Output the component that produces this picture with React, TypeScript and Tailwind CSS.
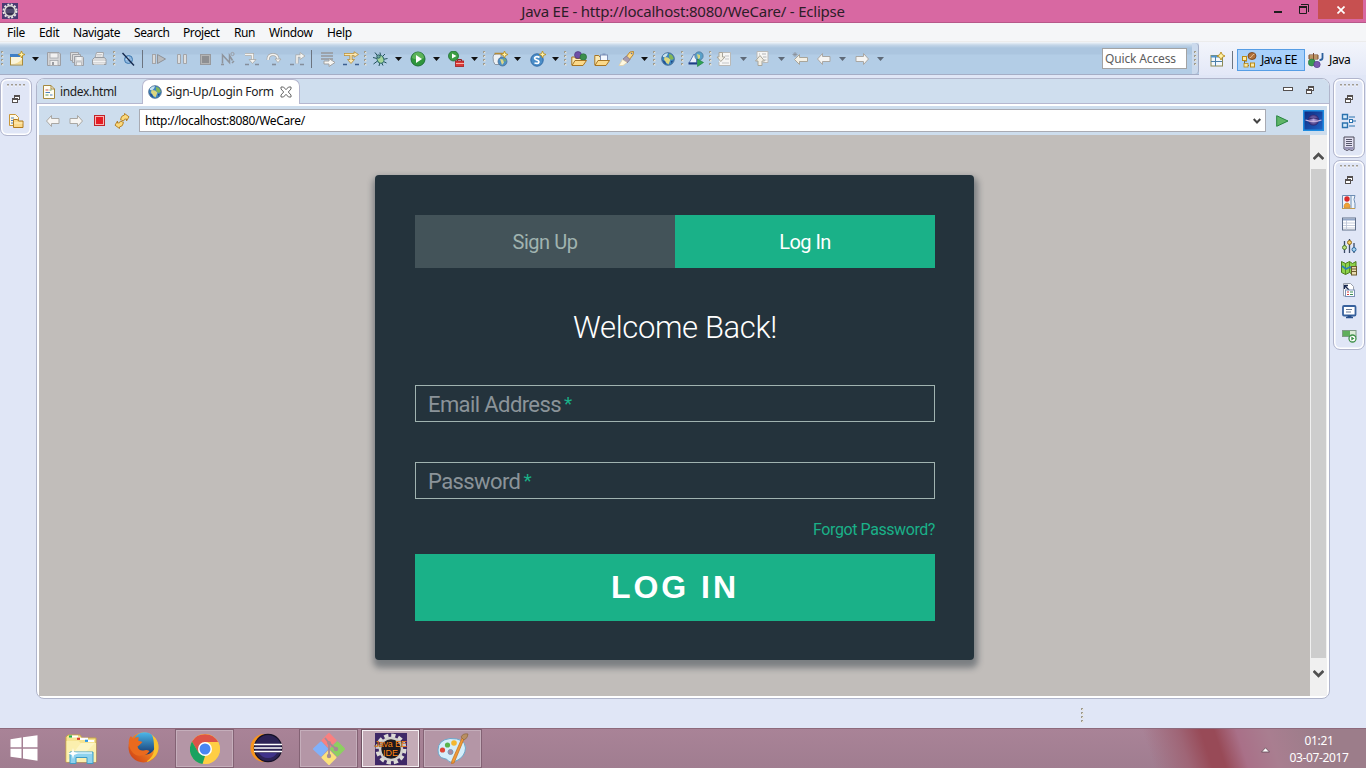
import React from "react";

type IconProps = { className?: string };

const Svg = ({ children, className = "", size = 16 }: { children: React.ReactNode; className?: string; size?: number }) => (
  <svg width={size} height={size} viewBox="0 0 16 16" fill="none" className={`block shrink-0 ${className}`}>
    {children}
  </svg>
);

/* ---------- shared glyphs ---------- */

const Handle = ({ className = "" }: IconProps) => (
  <svg width="3" height="18" viewBox="0 0 3 18" className={`block shrink-0 ${className}`}>
    {[1, 5, 9, 13].map((y) => (
      <g key={y}>
        <rect x="0" y={y} width="2" height="2" fill="#a09c8e" />
        <rect x="1" y={y + 1} width="1.5" height="1.5" fill="#e6e2d6" />
      </g>
    ))}
  </svg>
);

const Caret = ({ className = "", dim = false }: IconProps & { dim?: boolean }) => (
  <svg width="7" height="4" viewBox="0 0 7 4" className={`block shrink-0 ${className}`}>
    <path d="M0 0h7L3.5 4z" fill={dim ? "#5f6a78" : "#111"} />
  </svg>
);

const Sep = ({ className = "" }: IconProps) => <div className={`h-[18px] w-px shrink-0 bg-[#6c7480] ${className}`} />;

const Sparkle = () => (
  <path d="M12.500 0l1 2.500 2.500 1-2.500 1-1 2.500-1-2.500-2.500-1 2.500-1z" fill="#fff3a8" stroke="#b98a17" strokeWidth=".8" />
);

const ArrowLeft = ({ className = "" }: IconProps) => (
  <Svg className={className}>
    <path d="M1.500 8L6.500 2.500v3H14v5H6.500v3z" fill="#f6f5f3" stroke="#a9a7a3" strokeLinejoin="round" />
  </Svg>
);
const ArrowRight = ({ className = "" }: IconProps) => (
  <Svg className={`-scale-x-100 ${className}`}>
    <path d="M1.500 8L6.500 2.500v3H14v5H6.500v3z" fill="#f6f5f3" stroke="#a9a7a3" strokeLinejoin="round" />
  </Svg>
);

const Globe = ({ size = 16, className = "" }: IconProps & { size?: number }) => (
  <Svg size={size} className={className}>
    <circle cx="8" cy="8" r="6.300" fill="#3d86c0" stroke="#3c5f85" strokeWidth=".8" />
    <path d="M3 4.500Q5.500 1.800 8 2.300L7 4.500 5.500 6 3 6z" fill="#c9e3ee" />
    <path d="M4.500 6l3.500.5 2.500 2-2 5L6 11.500 4 8.500z" fill="#dcd67e" />
    <path d="M9 2.800l3 1.200 1.800 3.500-2 1.500-2.500-1.700z" fill="#83b657" />
    <path d="M11 10l2-.3-1.600 2.500z" fill="#1c3d78" />
    <path d="M2.300 9q1 3.500 4 4.500l-1-3z" fill="#204f93" />
  </Svg>
);

/* ---------- toolbar icons ---------- */

const NewWizard = ({ className }: IconProps) => (
  <Svg className={className}>
    <rect x="1.500" y="3.500" width="12" height="10.500" fill="#fbf5dc" stroke="#a88a3c" />
    <rect x="1" y="3" width="10" height="3" fill="#3f7fc6" />
    <path d="M3 13q6 0 10-5v5z" fill="#f3dd98" />
    <Sparkle />
  </Svg>
);
const Save = ({ className }: IconProps) => (
  <Svg className={className}>
    <path d="M1.500 1.500h11.500l1.500 1.500v11.500h-13z" fill="#d3d4d6" stroke="#9c9fa5" />
    <rect x="4" y="2" width="8" height="5" fill="#f1f1f1" stroke="#a6a8ac" strokeWidth=".8" />
    <rect x="4" y="9.500" width="8" height="5" fill="#eee" stroke="#a6a8ac" strokeWidth=".8" />
    <rect x="6" y="11" width="2" height="3" fill="#999ca2" />
  </Svg>
);
const SaveAll = ({ className }: IconProps) => (
  <Svg className={className}>
    <path d="M1.500 1.500h8v8h-8z" fill="#dcdcdd" stroke="#a0a2a7" />
    <path d="M3.500 3.500h8v8h-8z" fill="#dcdcdd" stroke="#a0a2a7" />
    <path d="M5.500 5.500h8l1 1v8h-9z" fill="#d3d4d6" stroke="#9c9fa5" />
    <rect x="7.500" y="6" width="5" height="3" fill="#f4f4f4" />
    <rect x="7.500" y="11" width="5" height="3.500" fill="#efefef" stroke="#a6a8ac" strokeWidth=".6" />
  </Svg>
);
const Print = ({ className }: IconProps) => (
  <Svg className={className}>
    <path d="M4 7L5.500 1.500h7L12 7z" fill="#f2f2f2" stroke="#a4a6aa" />
    <path d="M1.500 8.500L3.500 6.500h10l1.500 2v5h-13.500z" fill="#d8d8d9" stroke="#999ca1" />
    <path d="M2 10.500h12.500M3 13h10" stroke="#f3f3f3" />
    <path d="M6 3.500h5M5.500 5h5" stroke="#b7b9bc" strokeWidth=".7" />
  </Svg>
);
const SkipBreak = ({ className }: IconProps) => (
  <Svg className={className}>
    <circle cx="8.500" cy="8.500" r="4" fill="#8fb7df" stroke="#3e79b0" />
    <circle cx="7.500" cy="7.500" r="1.500" fill="#e0eefa" />
    <path d="M2.500 2l11.500 12.500" stroke="#15294e" strokeWidth="1.400" />
  </Svg>
);
const Resume = ({ className }: IconProps) => (
  <Svg className={className}>
    <rect x="1.500" y="3.500" width="3" height="9" fill="#d9d9d9" stroke="#a3a5a9" />
    <path d="M6.500 3.500L14.500 8l-8 4.500z" fill="#b9bbbe" stroke="#8f9297" />
  </Svg>
);
const Pause = ({ className }: IconProps) => (
  <Svg className={className}>
    <path d="M3.500 3.500h3v9h-3zM9.500 3.500h3v9h-3z" fill="#dedede" stroke="#a3a5a9" />
  </Svg>
);
const StopGrey = ({ className }: IconProps) => (
  <Svg className={className}>
    <rect x="3.500" y="3.500" width="10" height="10" fill="#b4b4b4" stroke="#989a9e" />
    <rect x="5" y="5" width="7" height="7" fill="#8e8f92" />
  </Svg>
);
const Disconnect = ({ className }: IconProps) => (
  <Svg className={className}>
    <path d="M2.500 12.500V4l7 7.500V4.500l3 5" stroke="#8f949c" strokeWidth="1.500" />
    <circle cx="12.500" cy="3" r="1.600" stroke="#9a9ea5" />
    <path d="M1 13.500h3M12 12l2-2" stroke="#8f949c" strokeWidth="1.500" />
  </Svg>
);
const StepInto = ({ className }: IconProps) => (
  <Svg className={className}>
    <path d="M2 3.500h7.500v6" stroke="#a7a7a5" strokeWidth="3" />
    <path d="M2 3.500h7.500v6" stroke="#f4f4f2" strokeWidth="1.600" />
    <path d="M6 8.500h7l-3.500 4z" fill="#f4f4f2" stroke="#a7a7a5" strokeWidth=".8" />
    <path d="M2 13.500h4M12 13.500h4" stroke="#858e9c" strokeWidth="1.600" />
  </Svg>
);
const StepOver = ({ className }: IconProps) => (
  <Svg className={className}>
    <path d="M2 9q0-5.500 5-5.500t5 5.500" stroke="#a7a7a5" strokeWidth="3" />
    <path d="M2 9q0-5.500 5-5.500t5 5.500" stroke="#f4f4f2" strokeWidth="1.600" />
    <path d="M9 8h6l-3 3.500z" fill="#f4f4f2" stroke="#a7a7a5" strokeWidth=".8" />
    <path d="M6 13.500h4" stroke="#858e9c" strokeWidth="1.600" />
  </Svg>
);
const StepReturn = ({ className }: IconProps) => (
  <Svg className={className}>
    <path d="M7 12.500V5h4" stroke="#a7a7a5" strokeWidth="3" />
    <path d="M10 1.500L15 5l-5 3.500z" fill="#f4f4f2" stroke="#a7a7a5" strokeWidth=".8" />
    <path d="M7 12.500V5h5" stroke="#f4f4f2" strokeWidth="1.600" />
    <path d="M0 13.500h4M10 13.500h4" stroke="#858e9c" strokeWidth="1.600" />
  </Svg>
);
const DropFrame = ({ className }: IconProps) => (
  <Svg className={className}>
    <path d="M1 2h12M1 5h12M1 8h12" stroke="#96979a" strokeWidth="1.600" />
    <path d="M4 10h5V7.500l6 4-6 4V13H4z" fill="#f6f6f4" stroke="#a1a1a1" />
  </Svg>
);
const StepFilters = ({ className }: IconProps) => (
  <Svg className={className}>
    <path d="M1 3.500h11M8 4v6" stroke="#b58a33" strokeWidth="3" />
    <path d="M11 .8l4.500 2.700L11 6.200zM4.500 8.500h7L8 12.500z" fill="#fbe9b5" stroke="#b58a33" strokeWidth=".8" />
    <path d="M1.500 3.500h12M8 4v7" stroke="#fbe9b5" strokeWidth="1.400" />
    <path d="M0 13.500h4M12 13.500h4" stroke="#3c5f90" strokeWidth="1.600" />
  </Svg>
);
const Bug = ({ className }: IconProps) => (
  <Svg className={className}>
    <path d="M3 1.500l3 4M1 6.500l4 1M1.500 13l4-3M8 1.500l.5 3M13 3l-3 3M15.500 7.500l-5 1M14.500 12l-4-2M7 15l1-4M11 14.500l-2-4" stroke="#23515c" />
    <ellipse cx="8.300" cy="8.500" rx="3.300" ry="4" fill="#a5d69b" stroke="#2c6d67" transform="rotate(-25 8 8)" />
    <circle cx="6.500" cy="5.500" r="1.700" fill="#6aa79d" stroke="#23515c" strokeWidth=".8" />
  </Svg>
);
const Run = ({ className }: IconProps) => (
  <Svg className={className}>
    <circle cx="8" cy="8" r="7" fill="#2f963c" stroke="#1e6f36" />
    <path d="M2 7a6 6 0 0112 0q-6 3-12 0z" fill="#7cc66c" opacity=".6" />
    <path d="M6 4l6 4-6 4z" fill="#fff" />
  </Svg>
);
const RunExt = ({ className }: IconProps) => (
  <Svg className={className}>
    <circle cx="5.500" cy="5" r="5" fill="#3b9c43" stroke="#1e6f36" strokeWidth=".8" />
    <path d="M4 2.500L8.500 5 4 7.500z" fill="#fff" />
    <path d="M9.500 10V8.500h4V10" stroke="#8c1d1d" />
    <rect x="7.500" y="10" width="8.500" height="5.500" fill="#d93a38" stroke="#9f1d1f" strokeWidth=".8" />
    <path d="M8 12.500h8" stroke="#f8b0a8" />
  </Svg>
);
const NewServer = ({ className }: IconProps) => (
  <Svg className={className}>
    <path d="M1 6q0-3 3-3h5v10.500H3Q.8 11 1 6z" fill="#eef1f4" stroke="#8f98a3" />
    <path d="M2.500 2.500h11" stroke="#b58a33" strokeWidth="1.500" />
    <circle cx="10.500" cy="10.500" r="4.500" fill="#4b8fc4" stroke="#47698f" strokeWidth=".7" />
    <path d="M8 8l3 .5 1 3-2 2.500z" fill="#dcd58a" />
    <path d="M11 7l3 2-1 2z" fill="#7fb657" />
    <Sparkle />
  </Svg>
);
const ServletNew = ({ className }: IconProps) => (
  <Svg className={className}>
    <circle cx="7" cy="9" r="6.200" fill="#4a8dc8" stroke="#2f6aa6" />
    <path d="M9.500 6.500Q7 4.800 5.200 6.200T6.800 9q2.500.8 2 2.400T4.500 12" stroke="#fff" strokeWidth="1.700" />
    <Sparkle />
  </Svg>
);
const OpenType = ({ className }: IconProps) => (
  <Svg className={className}>
    <path d="M.8 14V6h3l1 1.500H11V10" fill="#fbeab5" stroke="#a87522" />
    <circle cx="7" cy="4" r="3.500" fill="#6e4fa5" stroke="#46307a" strokeWidth=".6" />
    <circle cx="12.300" cy="6" r="3.300" fill="#3b8f4d" stroke="#24693a" strokeWidth=".6" />
    <path d="M1 14.500L4 9.500h11.500L12 14.500z" fill="#fbd98a" stroke="#a87522" />
  </Svg>
);
const OpenTask = ({ className }: IconProps) => (
  <Svg className={className}>
    <path d="M.8 14V4.500h4l1 1.500H13v4" fill="#fbeab5" stroke="#a87522" />
    <rect x="6.500" y="4" width="7" height="5.500" fill="#f4f8ff" stroke="#7d8fb4" />
    <rect x="8.500" y="2.500" width="3" height="1.500" fill="#8095be" />
    <path d="M1 14.500L4 9.500h11.500L12 14.500z" fill="#fbd98a" stroke="#a87522" />
  </Svg>
);
const Brush = ({ className }: IconProps) => (
  <Svg className={className}>
    <path d="M8 6l4-5 3.500-.5L15 4l-4 5z" fill="#fbd98a" stroke="#b9852d" />
    <path d="M5 8l3.500-3 3.500 3.500L9 12z" fill="#a79bb0" stroke="#7f7288" strokeWidth=".8" />
    <path d="M1 14.500L4.500 8.500 9 11.500l-4 3z" fill="#fff8e0" stroke="#e3cfa0" strokeWidth=".7" />
    <circle cx="13.500" cy="2.500" r=".8" fill="#5a72a8" />
  </Svg>
);
const RunServer = ({ className }: IconProps) => (
  <Svg className={className}>
    <path d="M1 12L6 3l2.500 3v6z" fill="#e9f0fb" stroke="#5f7fb8" />
    <path d="M.5 12.500h8.500" stroke="#1f3f86" strokeWidth="2" />
    <circle cx="11" cy="5" r="4.200" fill="#5aa0c9" stroke="#47698f" strokeWidth=".6" />
    <path d="M9 3l3 1v3l-2 1z" fill="#d5d67c" />
    <path d="M9.500 8l6 3.500-6 4z" fill="#2fa354" stroke="#1b7a3c" strokeWidth=".6" />
  </Svg>
);
const NextAnn = ({ className }: IconProps) => (
  <Svg className={className}>
    <path d="M5 1.500h9.500v13H3V11" fill="#f6f6f5" stroke="#b9b9b7" />
    <path d="M9 5h4M9 8h4M6 12h7" stroke="#c3c5c8" />
    <path d="M3 1.500h3.500V6H9l-4.200 4.500L1 6h2z" fill="#f3efe4" stroke="#a8a59a" />
  </Svg>
);
const PrevAnn = ({ className }: IconProps) => (
  <Svg className={className}>
    <path d="M3 7V.500h11v11H9" fill="#f6f6f5" stroke="#b9b9b7" />
    <path d="M5 3h1M8 3h4M9 6h3.500M10 9h2.500" stroke="#b3b5b8" />
    <path d="M4 14.500v-4.500H1.500L6 4.500l4.500 5.500H8v4.500z" fill="#f3efe4" stroke="#a8a59a" />
  </Svg>
);
const LastEdit = ({ className }: IconProps) => (
  <Svg className={className}>
    <path d="M2.500 8.500l5-5v3H15.500v4H7.500v3z" fill="#f3efe4" stroke="#a8a59a" />
    <path d="M3 1v5M.5 3.500h5M1.300 1.800l3.400 3.400M4.700 1.800L1.300 5.200" stroke="#8a9099" strokeWidth=".8" />
  </Svg>
);

type Tool = { el: (p: IconProps) => React.ReactNode; gap: string };
const DimCaret = (p: IconProps) => <Caret {...p} dim />;

const tools: Tool[] = [
  { el: Handle, gap: "ml-px" },
  { el: NewWizard, gap: "ml-[5px]" },
  { el: Caret, gap: "ml-[7px]" },
  { el: Save, gap: "ml-[7px]" },
  { el: SaveAll, gap: "ml-[7px]" },
  { el: Print, gap: "ml-[6px]" },
  { el: Handle, gap: "ml-[6px]" },
  { el: SkipBreak, gap: "ml-[4px]" },
  { el: Sep, gap: "ml-[6px]" },
  { el: Resume, gap: "ml-[8px]" },
  { el: Pause, gap: "ml-[7px]" },
  { el: StopGrey, gap: "ml-[7px]" },
  { el: Disconnect, gap: "ml-[7px]" },
  { el: StepInto, gap: "ml-[7px]" },
  { el: StepOver, gap: "ml-[7px]" },
  { el: StepReturn, gap: "ml-[8px]" },
  { el: Sep, gap: "ml-[5px]" },
  { el: DropFrame, gap: "ml-[8px]" },
  { el: StepFilters, gap: "ml-[7px]" },
  { el: Handle, gap: "ml-[5px]" },
  { el: Bug, gap: "ml-[5px]" },
  { el: Caret, gap: "ml-[7px]" },
  { el: Run, gap: "ml-[8px]" },
  { el: Caret, gap: "ml-[7px]" },
  { el: RunExt, gap: "ml-[8px]" },
  { el: Caret, gap: "ml-[7px]" },
  { el: Handle, gap: "ml-[5px]" },
  { el: NewServer, gap: "ml-[6px]" },
  { el: Caret, gap: "ml-[6px]" },
  { el: ServletNew, gap: "ml-[9px]" },
  { el: Caret, gap: "ml-[6px]" },
  { el: Handle, gap: "ml-[5px]" },
  { el: OpenType, gap: "ml-[4px]" },
  { el: OpenTask, gap: "ml-[7px]" },
  { el: Brush, gap: "ml-[8px]" },
  { el: Caret, gap: "ml-[7px]" },
  { el: Handle, gap: "ml-[5px]" },
  { el: Globe, gap: "ml-[4px]" },
  { el: Handle, gap: "ml-[5px]" },
  { el: RunServer, gap: "ml-[4px]" },
  { el: Handle, gap: "ml-[5px]" },
  { el: NextAnn, gap: "ml-[4px]" },
  { el: DimCaret, gap: "ml-[8px]" },
  { el: PrevAnn, gap: "ml-[7px]" },
  { el: DimCaret, gap: "ml-[8px]" },
  { el: LastEdit, gap: "ml-[7px]" },
  { el: ArrowLeft, gap: "ml-[8px]" },
  { el: DimCaret, gap: "ml-[7px]" },
  { el: ArrowRight, gap: "ml-[8px]" },
  { el: DimCaret, gap: "ml-[7px]" },
];

/* ---------- perspective + trim icons ---------- */

const OpenPerspective = ({ className }: IconProps) => (
  <Svg className={className}>
    <rect x="2" y="3.500" width="11.500" height="10.500" fill="#f3f8fd" stroke="#8c8a55" />
    <rect x="2" y="3.500" width="11.500" height="2" fill="#4d93cf" />
    <path d="M6.500 5v9M2 9.500h11" stroke="#4d7fa8" />
    <path d="M12 0l1.300 2.700L16 4l-2.700 1.300L12 8l-1.300-2.700L8 4l2.700-1.300z" fill="#fff3a8" stroke="#b98a17" strokeWidth=".9" />
  </Svg>
);
const JavaEE = ({ className }: IconProps) => (
  <Svg className={className}>
    <path d="M3.500 6v7.500H8M3.500 9H6" stroke="#7b6a3a" />
    <rect x="1.500" y="4.500" width="4" height="4" fill="#fce9a6" stroke="#b98a17" />
    <rect x="9.500" y="11" width="4" height="4" fill="#fce9a6" stroke="#b98a17" />
    <rect x="3" y="11.500" width="4" height="3.500" fill="#fce9a6" stroke="#b98a17" strokeWidth=".8" />
    <ellipse cx="11" cy="4" rx="4" ry="3.500" fill="#b0703a" stroke="#6e3d17" strokeWidth=".8" />
    <path d="M8.500 6q2-.5 2.500-2t2.500-2" stroke="#f0d0a8" strokeWidth=".8" />
  </Svg>
);
const JavaPersp = ({ className }: IconProps) => (
  <Svg className={className}>
    <path d="M1 3h9v4H1zM5.500 1v7M1 5h9" fill="#f7dfa0" stroke="#7d4a2c" />
    <circle cx="3.800" cy="10.500" r="3.500" fill="#3a9a52" stroke="#23703b" strokeWidth=".6" />
    <circle cx="9" cy="12.500" r="3.200" fill="#7a5aae" stroke="#513889" strokeWidth=".6" />
    <path d="M14.500 1v5q0 2-3 2" stroke="#2b5f9c" strokeWidth="1.800" />
  </Svg>
);
const Restore = ({ className = "" }: IconProps) => (
  <svg width="8" height="8" viewBox="0 0 8 8" className={`block shrink-0 ${className}`} fill="none">
    <rect x="2.500" y=".5" width="5" height="4" fill="#fff" stroke="#55504f" />
    <path d="M2 1h6" stroke="#55504f" strokeWidth="2" />
    <rect x=".5" y="3.500" width="5" height="4" fill="#fff" stroke="#55504f" />
    <path d="M0 4h6" stroke="#55504f" strokeWidth="2" />
  </svg>
);
const DotsH = () => (
  <svg width="18" height="3" viewBox="0 0 18 3" className="block shrink-0">
    {[0, 4, 8, 12, 16].map((x) => (
      <g key={x}>
        <rect x={x} y="1" width="1.500" height="1.500" fill="#fff" />
        <rect x={x} y="0" width="2" height="1.500" fill="#9f9a90" />
      </g>
    ))}
  </svg>
);
const ProjExplorer = ({ className }: IconProps) => (
  <Svg className={className}>
    <path d="M1.500 1.500h6l3 3v8h-9z" fill="#fff9e6" stroke="#c9973a" />
    <path d="M3 5h3M3 7.500h2.500M3 10h2" stroke="#4d7fc0" />
    <path d="M5.500 14.500v-8h4l1 1.500h4.500v6.500z" fill="#fbd98a" stroke="#b07a20" />
    <path d="M6 10h8.500" stroke="#fff0c4" />
  </Svg>
);
const Outline = ({ className }: IconProps) => (
  <Svg className={className}>
    <path d="M1.500 1.500h5v4.500h-5zM1.500 10h5v4.500h-5z" fill="#d6eafa" stroke="#2b72ae" strokeWidth="1.400" />
    <path d="M8 4h6M8 13h6M12 8h3" stroke="#2b72ae" strokeWidth="1.200" />
    <rect x="8.500" y="6.500" width="3" height="3" fill="#fff" stroke="#2b72ae" />
  </Svg>
);
const TaskList = ({ className }: IconProps) => (
  <Svg className={className}>
    <path d="M3 1h10v12.500l-2 1-3-1-2 1-3-1.500z" fill="#e3e1f2" stroke="#4c4a5a" />
    <path d="M5 3.500h6M5 5.500h6M5 7.500h6M5 9.500h6" stroke="#57566a" />
    <path d="M3.500 11h9v2l-2 1-3-1-2 1-2-1z" fill="#9a96b8" />
  </Svg>
);
const Markers = ({ className }: IconProps) => (
  <Svg className={className}>
    <path d="M1.500 1.500H10v13H1.500zM10 1.500h4l-1 4 1 4v5h-4" fill="#eef4fb" stroke="#6d8db3" />
    <path d="M1 14.500h13" stroke="#c39b4e" />
    <circle cx="6" cy="5" r="2.700" fill="#d92a2a" />
    <path d="M3 13.500q0-4.500 3-4.500t3 4.500z" fill="#f0a232" stroke="#c77718" strokeWidth=".6" />
  </Svg>
);
const Properties = ({ className }: IconProps) => (
  <Svg className={className}>
    <rect x="1.500" y="2" width="13" height="12" fill="#fff" stroke="#61708a" />
    <path d="M2 3.500h12" stroke="#93a7c8" strokeWidth="2" />
    <path d="M5.500 4v10M2 7h12M2 9.500h12M2 12h12" stroke="#b9c2d4" strokeWidth=".8" />
  </Svg>
);
const Servers = ({ className }: IconProps) => (
  <Svg className={className}>
    <path d="M3.500 3v12M8.500 1v14M13 5v10" stroke="#3b4a66" strokeWidth="1.300" />
    <circle cx="3.500" cy="9.500" r="2" fill="#bfe07a" stroke="#4c7a32" />
    <circle cx="8.500" cy="4.500" r="2" fill="#f6cf64" stroke="#936a1e" />
    <circle cx="13" cy="11.500" r="2" fill="#a9d4f2" stroke="#2d6a9d" />
  </Svg>
);
const DataSource = ({ className }: IconProps) => (
  <Svg className={className}>
    <path d="M.5 1.500l4 2 4-2 3 2 3.500-2v11l-3.500 2-3-2-4 2-4-2z" fill="#8cd34a" stroke="#4c7b1f" />
    <path d="M4.500 3.500v11M8.500 1.500v11" stroke="#5b8b25" />
    <path d="M1 6l4 3 4-2 3 3" stroke="#2a7fb5" strokeWidth="1.600" />
    <rect x="10.500" y="6.500" width="5" height="8.500" fill="#e9dcb0" stroke="#6b5b2c" />
    <path d="M11 9h4M11 11.500h4" stroke="#6b5b2c" />
  </Svg>
);
const Snippets = ({ className }: IconProps) => (
  <Svg className={className}>
    <path d="M2.500 1.500h7l3 3v9.500h-10z" fill="#fff" stroke="#9aa0ad" />
    <path d="M8 8L4 4M3.500 7V3.500H7" stroke="#16264f" strokeWidth="1.300" />
    <rect x="4.500" y="8" width="9" height="6.500" fill="#fff" stroke="#7c90b5" />
    <path d="M6 10h2M6 12.500h2" stroke="#d43a3a" />
    <path d="M9 10h3M9 12.500h3" stroke="#3c8f57" />
  </Svg>
);
const Console = ({ className }: IconProps) => (
  <Svg className={className}>
    <rect x="2" y="2" width="12.500" height="9.500" rx="1" fill="#fff" stroke="#37619d" strokeWidth="1.800" />
    <path d="M5 5.500h6M5 8h5" stroke="#6b7b95" />
    <path d="M5 13.500h7M6.500 12h4" stroke="#28508c" strokeWidth="1.600" />
  </Svg>
);
const Progress = ({ className }: IconProps) => (
  <Svg className={className}>
    <rect x="1.500" y="2.500" width="13.500" height="6" fill="#dcebd8" stroke="#7f9a88" />
    <rect x="2" y="3" width="7" height="5" fill="#5fae5c" />
    <circle cx="11.500" cy="10.500" r="3.500" fill="#fff" stroke="#3d9048" strokeWidth="1.300" />
    <path d="M10.300 8.500l3.200 2-3.200 2z" fill="#3d9048" />
  </Svg>
);

/* ---------- window chrome ---------- */

const TitleBar = () => (
  <header className="flex h-[23px] shrink-0 items-start border-b border-[#b7588a] bg-[#d868a2]">
    <div className="w-[120px] pt-[3px] pl-[2px]">
      <svg width="16" height="16" viewBox="0 0 16 16">
        <rect width="16" height="16" fill="#4a3a72" />
        <circle cx="8" cy="8" r="6.500" fill="none" stroke="#e7e5e2" strokeWidth="2" strokeDasharray="2 1.400" />
        <circle cx="8" cy="8" r="5.300" fill="#35304d" stroke="#dedcd8" strokeWidth="1.500" />
        <path d="M4 7h8M4 9h8" stroke="#6c6690" />
      </svg>
    </div>
    <h1 className="flex-1 text-center text-[15px] leading-[23px] tracking-[-0.220px] text-[#2c1d28]">
      Java EE - http://localhost:8080/WeCare/ - Eclipse
    </h1>
    <div className="flex h-[19px] w-[120px] items-start justify-end pr-[3px]">
      <svg width="8" height="3" className="mt-[11px] mr-[17px]">
        <rect y="0" width="8" height="2" fill="#1d1d1d" />
      </svg>
      <svg width="10" height="10" viewBox="0 0 10 10" fill="none" className="mt-[4px] mr-[9px]">
        <path d="M2 .5h7.500V8" stroke="#1d1d1d" />
        <path d="M0 3h8" stroke="#1d1d1d" strokeWidth="2" />
        <path d="M.5 3v6.500h7V3" stroke="#1d1d1d" />
      </svg>
      <div className="flex h-[19px] w-[45px] items-center justify-center bg-[#c75050]">
        <svg width="8" height="8" viewBox="0 0 8 8">
          <path d="M.5.5l7 7M7.500.5l-7 7" stroke="#fff" strokeWidth="1.700" />
        </svg>
      </div>
    </div>
  </header>
);

const MenuBar = () => (
  <nav className="flex h-[19px] shrink-0 items-center border-b border-[#ececec] bg-[#f5f6f8] pt-[2px] text-[12px] leading-[18px] text-black">
    <span className="ml-[7px] w-[32px] tracking-[-0.300px]">File</span>
    <span className="w-[34px] tracking-[-0.300px]">Edit</span>
    <span className="w-[61px] tracking-[-0.400px]">Navigate</span>
    <span className="w-[49px] tracking-[-0.400px]">Search</span>
    <span className="w-[51px] tracking-[-0.400px]">Project</span>
    <span className="w-[35px] tracking-[-0.400px]">Run</span>
    <span className="w-[58px] tracking-[-0.300px]">Window</span>
    <span className="tracking-[-0.350px]">Help</span>
  </nav>
);

const ToolBar = () => (
  <div className="flex h-[33px] shrink-0 bg-linear-to-b from-[#f3f5fb] to-[#e3e8f7]">
    <div className="flex w-[1199px] shrink-0 items-center border-b border-[#a5aec6] bg-[linear-gradient(180deg,#f4f7fa_0px,#c4d6e8_3px,#abc5df_6px,#abc5df_12px,#b3cde6_13px,#b3cde6_100%)] pt-px">
      {tools.map(({ el: El, gap }, i) => (
        <El key={i} className={gap} />
      ))}
      <div className="mr-[5px] ml-auto flex h-[21px] w-[85px] items-center border border-[#a3a3a3] bg-white pl-[2px] text-[12px] tracking-[-0.150px] text-[#5d5d5d]">
        Quick Access
      </div>
      <div className="flex h-[31px] w-[7px] items-center justify-center rounded-r-sm border-r border-[#a5aec6] bg-[#cbdaed]">
        <Handle />
      </div>
    </div>
    <div className="flex flex-1 items-center pt-[2px]">
      <OpenPerspective className="ml-[10px]" />
      <Sep className="ml-[7px]" />
      <div className="ml-[4px] flex h-[22px] w-[68px] items-center border border-[#569de5] bg-[#a9d1fb] pl-[3px] text-[12px] text-black">
        <JavaEE />
        <span className="ml-[4px] whitespace-nowrap tracking-[-0.500px]">Java EE</span>
      </div>
      <JavaPersp className="ml-[3px]" />
      <span className="ml-[5px] text-[12px] tracking-[-0.400px] text-black">Java</span>
    </div>
  </div>
);

const TrimStack = ({ children, className }: { children: React.ReactNode; className: string }) => (
  <div className={`flex w-[32px] flex-col items-center rounded-[7px] border border-[#b1b5cc] bg-[#e0e6f6] shadow-[inset_0_0_0_1.500px_#fff] ${className}`}>
    {children}
  </div>
);

const EditorTabs = () => (
  <div className="flex h-[25px] shrink-0 border-b border-[#b5b7cf] bg-[#cfdeee]">
    <div className="flex w-[105px] items-center pt-[2px] pl-[4px] text-[12px] text-[#1c1c1c]">
      <Svg>
        <path d="M2.500 1.500h7.500l3.500 3.500v9.500h-11z" fill="#fffdf2" stroke="#a5893f" />
        <path d="M10 1.500V5h3.500" stroke="#a5893f" />
        <path d="M4.500 6h3" stroke="#d05454" />
        <path d="M4.500 8.500h4.500M9 11h2.500" stroke="#4d7fc0" />
        <path d="M4.500 11h3M8.500 6h2" stroke="#5d9c61" />
      </Svg>
      <span className="ml-[3px] tracking-[-0.350px]">index.html</span>
    </div>
    <div className="-mb-px flex w-[158px] items-center rounded-t-[7px] border-x border-t border-[#b5b7cf] bg-white pl-[4px] text-[12px] text-[#1c1c1c]">
      <Globe />
      <span className="ml-[3px] whitespace-nowrap tracking-[-0.300px]">Sign-Up/Login Form</span>
      <svg width="12" height="12" viewBox="0 0 12 12" fill="none" className="ml-[6px] shrink-0">
        <path d="M1 1h2.500L6 3.700 8.500 1H11v2L8.300 6 11 9v2H8.500L6 8.300 3.500 11H1V9l2.700-3L1 3z" stroke="#666" />
      </svg>
    </div>
    <div className="ml-auto flex pr-[15px]">
      <svg width="10" height="4" className="mt-[8px] mr-[13px]" fill="none">
        <rect x=".5" y=".5" width="9" height="3" fill="#fff" stroke="#55504f" />
      </svg>
      <Restore className="mt-[7px]" />
    </div>
  </div>
);

const BrowserBar = () => (
  <div className="mt-[2px] flex h-[29px] shrink-0 items-center bg-[#cddded]">
    <ArrowLeft className="ml-[6px]" />
    <ArrowRight className="ml-[7px]" />
    <svg width="11" height="11" viewBox="0 0 11 11" className="ml-[10px]">
      <rect x=".5" y=".5" width="10" height="10" fill="#f7b5b3" stroke="#c22329" />
      <rect x="2" y="2" width="7" height="7" fill="#e51c24" />
    </svg>
    <Svg className="ml-[9px]">
      <path d="M6.500 6.500Q7 2.500 10.500 2V.5L15 3.800 12.500 8V6Q10 5.500 9.500 8z" fill="#fbd97c" stroke="#b07a20" strokeWidth=".9" strokeLinejoin="round" />
      <path d="M9.500 9.500Q9 13.500 5.500 14v1.500L1 12.200 3.500 8v2Q6 10.500 6.500 8z" fill="#fbd97c" stroke="#b07a20" strokeWidth=".9" strokeLinejoin="round" />
    </Svg>
    <div className="ml-[9px] flex h-[23px] w-[1127px] items-center justify-between border border-[#a9abb3] bg-white pr-[4px] pl-[5px] text-[12px] text-black">
      <span className="tracking-[-0.330px]">http://localhost:8080/WeCare/</span>
      <svg width="8" height="6" viewBox="0 0 8 6" fill="none">
        <path d="M.7 1L4 4.500 7.300 1" stroke="#444" strokeWidth="2" />
      </svg>
    </div>
    <svg width="13" height="12" viewBox="0 0 13 12" className="ml-[10px]">
      <path d="M.7.7L12 6 .7 11.300z" fill="#5fb567" stroke="#25843f" />
    </svg>
    <svg width="21" height="21" viewBox="0 0 21 21" className="ml-[14px]">
      <defs>
        <radialGradient id="orb">
          <stop offset="0" stopColor="#c3b2ea" />
          <stop offset="1" stopColor="#2c2470" />
        </radialGradient>
        <linearGradient id="orbBg" x1="0" y1="0" x2="1" y2="1">
          <stop offset="0" stopColor="#102a80" />
          <stop offset="1" stopColor="#1f63c4" />
        </linearGradient>
      </defs>
      <rect width="21" height="21" fill="#1d8be0" />
      <rect x="1.500" y="1.500" width="18" height="18" fill="url(#orbBg)" />
      <circle cx="10.500" cy="10" r="5.500" fill="url(#orb)" />
      <path d="M2.500 10q8 3 16 0" fill="none" stroke="#cbb6e0" strokeWidth="1.100" />
      <path d="M5.500 8.800q5-1.600 10 0" fill="none" stroke="#3a2c72" />
    </svg>
  </div>
);

const Field = ({ label }: { label: string }) => (
  <label className="flex h-[37px] items-center border border-[#a0b3b0] pt-[2px] pl-[12px] text-[22px] leading-none text-[#8b9399]">
    <span className="tracking-[-0.600px]">{label}</span>
    <span className="mb-[2px] ml-[3px] text-[19px] text-[#1ab188]">*</span>
  </label>
);

const LoginCard = () => (
  <section className="mt-[40px] flex h-[485px] w-[599px] flex-col rounded-[4px] bg-[#24333c] p-[40px] font-['Roboto',sans-serif] shadow-[1px_5px_6px_3px_rgba(19,35,47,0.400)]">
    <div className="flex h-[53px] w-[520px] shrink-0 text-[20px] leading-[54px]">
      <div className="flex-1 bg-[#435359] text-center tracking-[-0.450px] text-[#a0b3b0]">Sign Up</div>
      <div className="flex-1 bg-[#1ab188] text-center tracking-[-0.550px] text-white">Log In</div>
    </div>
    <h2 className="mt-[39px] h-[38px] w-[520px] text-center text-[31px] leading-[42px] font-light tracking-[-0.350px] text-white">
      Welcome Back!
    </h2>
    <div className="mt-[40px] flex w-[520px] flex-col gap-[40px]">
      <Field label="Email Address" />
      <Field label="Password" />
    </div>
    <p className="mt-[20px] h-[20px] w-[520px] text-right text-[16px] leading-[22px] tracking-[-0.420px] text-[#1ab188]">Forgot Password?</p>
    <button className="mt-[15px] h-[67px] w-[520px] shrink-0 bg-[#1ab188] pb-[2px] font-['Liberation_Sans',sans-serif] text-[32px] leading-none font-bold tracking-[3px] text-white">
      LOG IN
    </button>
  </section>
);

const ScrollBar = () => (
  <div className="flex w-[17px] shrink-0 flex-col items-center bg-[#f0f0f0]">
    <svg width="11" height="8" viewBox="0 0 11 8" fill="none" className="mt-[17px]">
      <path d="M.6 7L5.500 2.200 10.400 7" stroke="#505050" strokeWidth="2.800" />
    </svg>
    <div className="mt-[9px] h-[489px] w-[15px] bg-[#cdcdcd]" />
    <svg width="11" height="8" viewBox="0 0 11 8" fill="none" className="mt-[12px]">
      <path d="M.6 1L5.500 5.800 10.400 1" stroke="#505050" strokeWidth="2.800" />
    </svg>
  </div>
);

const Editor = () => (
  <main className="flex h-[621px] w-[1294px] flex-col overflow-hidden rounded-[8px] border border-[#b0b5cb] bg-white">
    <EditorTabs />
    <div className="flex min-h-0 flex-1 flex-col pr-[2px] pb-px pl-[2px]">
      <BrowserBar />
      <div className="flex min-h-0 flex-1 overflow-hidden pb-px">
        <div className="flex flex-1 justify-center overflow-hidden bg-[#c1bdba]">
          <LoginCard />
        </div>
        <ScrollBar />
      </div>
    </div>
  </main>
);

/* ---------- taskbar ---------- */

const Windows = () => (
  <svg width="28" height="26" viewBox="0 0 28 26" fill="#fff">
    <path d="M.5 4.200L11.500 2.600v9.700H.5zM13 2.300L27.500.3v12H13zM.5 13.700h11v9.600L.5 21.700zM13 13.700h14.500v12L13 23.600z" />
  </svg>
);
const Explorer = () => (
  <svg width="32" height="30" viewBox="0 0 32 30" fill="none">
    <path d="M1 28V3l2-2h12l2 3h14v24z" fill="#f6e492" stroke="#c9a845" />
    <path d="M4 2.500h9M12 4.800h11M20 7h9" stroke="#fff" strokeWidth="2.200" />
    <path d="M4 2.500h3" stroke="#25b04a" strokeWidth="2.200" />
    <path d="M12 4.800h3" stroke="#da3c2a" strokeWidth="2.200" />
    <path d="M20 6.800h3" stroke="#2b95dd" strokeWidth="2.200" />
    <path d="M1.500 7h12l2 2H31v19H1.500z" fill="#fbefae" />
    <path d="M2 27L16 9h14L12 27z" fill="#fff8d4" opacity=".6" />
    <path d="M5 29.500V18h23v11.500h-6v-6H11v6z" fill="#8ed2ee" stroke="#3e9cc6" />
    <path d="M6 19h21" stroke="#d8f3fc" strokeWidth="1.500" />
    <path d="M8 14l1 4 4 1.500-4 1.500-1 4-1-4-4-1.500L7 18z" fill="#fff" />
  </svg>
);
const Firefox = () => (
  <svg width="31" height="31" viewBox="0 0 31 31">
    <defs>
      <linearGradient id="ff" x1="1" y1="0" x2="0" y2="1">
        <stop offset="0" stopColor="#fcea57" />
        <stop offset=".45" stopColor="#f0801f" />
        <stop offset="1" stopColor="#c73515" />
      </linearGradient>
      <linearGradient id="ffb" x1="0" y1="0" x2="0" y2="1">
        <stop offset="0" stopColor="#4bb8ea" />
        <stop offset="1" stopColor="#15366f" />
      </linearGradient>
    </defs>
    <circle cx="15.500" cy="15.500" r="15" fill="url(#ff)" />
    <circle cx="16.500" cy="11.500" r="11.300" fill="url(#ffb)" />
    <path d="M1 14Q0 7 3 4l2 3Q8 4.500 11 5.500l-1 3 4.500 1.500-3 3-2 1.500q1 4.500 6 4 3.500-1 6 .5-3 5-9 4.500Q5 25 1 14z" fill="#ea6a1e" />
    <path d="M24 3q8 6 6 16-3 9-12 11 9-6 8-15 0-8-2-12z" fill="#f8c22f" />
  </svg>
);
const Chrome = () => (
  <svg width="30" height="30" viewBox="0 0 30 30">
    <circle cx="15" cy="15" r="15" fill="#ffce44" />
    <path d="M2 7.500A15 15 0 0128.100 8H15l-6.500 11z" fill="#dd5347" />
    <path d="M2 7.500l6.600 11.200L15 22l-2.500 8A15 15 0 012 7.500z" fill="#1aa260" />
    <path d="M15 8h13.100a15 15 0 01-14 22L21 18z" fill="#ffce44" />
    <circle cx="15" cy="15" r="7" fill="#fff" />
    <circle cx="15" cy="15" r="5.500" fill="#4a86f3" />
  </svg>
);
const EclipseLogo = () => (
  <svg width="33" height="30" viewBox="0 0 33 30">
    <path d="M14.500 1A14 14 0 0014.500 29Q8 24 8 15T14.500 1z" fill="#f7941e" />
    <circle cx="18" cy="15" r="13.700" fill="#2c2255" stroke="#151126" strokeWidth="1.200" />
    <path d="M9 20h18q-3 5-9 5t-9-5z" fill="#40338a" />
    <path d="M4 11.500h28M4 15h28M4 18.500h28" stroke="#fff" strokeWidth="1.700" />
  </svg>
);
const Git = () => (
  <svg width="32" height="32" viewBox="0 0 32 32" fill="none">
    <path d="M16 1l6.500 6.500L16 14 9.500 7.500z" fill="#f98080" stroke="#f98080" strokeWidth="2" strokeLinejoin="round" />
    <path d="M8 9.500l6 6.500-6 6.500L1 16z" fill="#81b1fa" stroke="#81b1fa" strokeWidth="2" strokeLinejoin="round" />
    <path d="M24.500 9.500l6.500 6.500-6.500 6.500L18 16z" fill="#8dd060" stroke="#8dd060" strokeWidth="2" strokeLinejoin="round" />
    <path d="M16 18l6.500 6.500L16 31l-6.500-6.500z" fill="#fbe27c" stroke="#fbe27c" strokeWidth="2" strokeLinejoin="round" />
    <path d="M12 5l4 5v13M16 10l6 5" stroke="#a58a96" strokeWidth="1.800" />
    <circle cx="16" cy="10" r="2" fill="#a58a96" />
    <circle cx="23" cy="16" r="2.200" fill="#a58a96" />
    <circle cx="16" cy="23" r="2.200" fill="#a58a96" />
  </svg>
);
const JavaEEIde = () => (
  <div className="relative h-[32px] w-[32px]">
    <svg width="32" height="32" viewBox="0 0 32 32" fill="none">
      <rect width="32" height="32" fill="#3f2867" />
      <circle cx="16" cy="16" r="13.500" stroke="#dcdad6" strokeWidth="4" strokeDasharray="4.200 2.850" />
      <circle cx="16" cy="16" r="11" fill="#1d1a20" stroke="#d2d0cc" strokeWidth="2.500" />
    </svg>
    <div className="absolute inset-x-0 top-[7px] flex flex-col items-center font-['Liberation_Sans',sans-serif] text-[9px] leading-[9px] whitespace-nowrap text-[#ff8a1e] [text-shadow:0_0_1px_#000]">
      <span className="block h-[9px] tracking-[-0.200px]">Java EE</span>
      <span className="block h-[9px]">IDE</span>
    </div>
  </div>
);
const Paint = () => (
  <svg width="32" height="31" viewBox="0 0 32 31" fill="none">
    <path d="M1 17Q1 7 13 5.500 28 5 28.500 15 28 23 21 27q-6 3-9 1.500-2-3-5-3-6-1-6-8.500z" fill="#d5edfa" stroke="#6ba7cb" />
    <circle cx="13.500" cy="19" r="2.500" fill="#a98aa0" stroke="#7d98b5" />
    <circle cx="5.500" cy="17" r="2.600" fill="#df4636" />
    <circle cx="10.500" cy="12" r="2.600" fill="#59b44b" />
    <circle cx="17" cy="10" r="2.800" fill="#f4b72f" />
    <path d="M27 6L17 30l-2.500.5.500-3L25 5z" fill="#f09a38" stroke="#c06f18" strokeWidth=".7" />
    <path d="M24 4Q26 0 31 1q0 4-4 6z" fill="#b98f62" stroke="#8b6640" strokeWidth=".7" />
  </svg>
);

const TaskButton = ({ children, className }: { children: React.ReactNode; className: string }) => (
  <div className={`flex h-[39px] w-[59px] shrink-0 items-center justify-center border ${className}`}>{children}</div>
);
const openBtn = "border-[#836274] bg-[#b496a6] shadow-[inset_0_0_0_1px_#c5aebb]";

const TaskBar = () => (
  <footer className="flex h-[40px] shrink-0 items-start border-t border-[#8e6a7c] bg-linear-to-b from-[#a98397] to-[#a07d90]">
    <div className="mt-[6px] ml-[10px]">
      <Windows />
    </div>
    <div className="mt-[5px] ml-[27px]">
      <Explorer />
    </div>
    <div className="mt-[3px] ml-[31px]">
      <Firefox />
    </div>
    <TaskButton className={`ml-[16px] ${openBtn}`}>
      <Chrome />
    </TaskButton>
    <div className="mt-[4px] ml-[16px]">
      <EclipseLogo />
    </div>
    <TaskButton className={`ml-[16px] ${openBtn}`}>
      <Git />
    </TaskButton>
    <TaskButton className="ml-[3px] border-[#6f5262] bg-[#c4abb7] shadow-[inset_0_0_0_1px_#f5eef2]">
      <JavaEEIde />
    </TaskButton>
    <TaskButton className={`ml-[3px] ${openBtn}`}>
      <Paint />
    </TaskButton>
    <div className="flex h-full min-w-0 flex-1 items-center justify-end bg-[linear-gradient(72deg,transparent_75%,#9f6576_79%,#984a57_81.500%,#984a57_83%,#a97088_85.500%,#a97e90_89%,#9c7d8a_94%)]">
      <svg width="9" height="6" viewBox="0 0 9 6" className="mt-[2px]">
        <path d="M.5 5L4.500.8 8.500 5z" fill="#fff" stroke="#5e4552" strokeWidth=".8" />
      </svg>
      <div className="mr-[9px] ml-[11px] w-[76px] text-center text-[12px] leading-[17px] tracking-[-0.350px] text-white">
        <div>01:21</div>
        <div>03-07-2017</div>
      </div>
    </div>
  </footer>
);

export default function App() {
  return (
    <div className="flex h-[768px] w-[1366px] flex-col overflow-hidden bg-[#e0e6f6] font-['Noto_Sans',sans-serif]">
      <TitleBar />
      <MenuBar />
      <ToolBar />
      <div className="flex h-[629px] shrink-0 pt-[3px]">
        <div className="w-[36px] shrink-0">
          <TrimStack className="h-[58px]">
            <div className="mt-[5px]">
              <DotsH />
            </div>
            <Restore className="mt-[8px]" />
            <ProjExplorer className="mt-[10px]" />
          </TrimStack>
        </div>
        <Editor />
        <div className="ml-[3px] w-[33px] shrink-0">
          <TrimStack className="h-[80px]">
            <div className="mt-[5px]">
              <DotsH />
            </div>
            <Restore className="mt-[8px]" />
            <Outline className="mt-[10px]" />
            <TaskList className="mt-[7px]" />
          </TrimStack>
          <TrimStack className="mt-[2px] h-[190px]">
            <div className="mt-[4px]">
              <DotsH />
            </div>
            <Restore className="mt-[8px]" />
            <Markers className="mt-[10px]" />
            <Properties className="mt-[6px]" />
            <Servers className="mt-[6px]" />
            <DataSource className="mt-[6px]" />
            <Snippets className="mt-[6px]" />
            <Console className="mt-[6px]" />
            <Progress className="mt-[8px]" />
          </TrimStack>
        </div>
      </div>
      <div className="flex flex-1 items-center pb-[1px] pl-[1081px]">
        <Handle />
      </div>
      <TaskBar />
    </div>
  );
}
